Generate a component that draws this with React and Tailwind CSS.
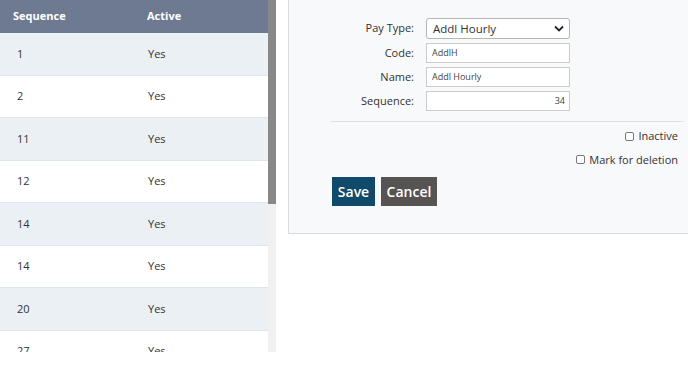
import React from 'react';

const rows = [
    { seq: '1', active: 'Yes' },
    { seq: '2', active: 'Yes' },
    { seq: '11', active: 'Yes' },
    { seq: '12', active: 'Yes' },
    { seq: '14', active: 'Yes' },
    { seq: '14', active: 'Yes' },
    { seq: '20', active: 'Yes' },
    { seq: '27', active: 'Yes' },
];

function Field({ label, children }) {
    return (
        <div className="flex items-center">
            <label className="w-[137px] shrink-0 pr-[12px] text-right text-[11px] text-[#333]">{label}</label>
            {children}
        </div>
    );
}

export default function App() {
    return (
        <div className="flex h-[384px] w-[688px] overflow-hidden bg-white font-['Open_Sans',sans-serif]">
            {/* grid with scrollbar */}
            <div className="flex h-[352px] shrink-0">
                <div className="w-[268px] overflow-hidden">
                    <div className="flex h-[33px] items-center bg-[#6d7a91] text-[11px] font-bold text-white">
                        <span className="w-[147px] pl-[13px]">Sequence</span>
                        <span>Active</span>
                    </div>
                    {rows.map((r, i) => (
                        <div
                            key={i}
                            className={`flex h-[42.5px] items-center border-b border-[#dfe5ec] text-[11px] text-[#333] ${i % 2 === 0 ? 'bg-[#ebf0f5]' : 'bg-white'}`}
                        >
                            <span className="w-[148px] pl-[17px]">{r.seq}</span>
                            <span>{r.active}</span>
                        </div>
                    ))}
                </div>
                <div className="flex w-[8px] flex-col bg-[#f0f0f0]">
                    <div className="h-[204px] bg-[#888888]"></div>
                </div>
            </div>

            {/* edit panel */}
            <div className="ml-[12px] h-[234px] w-[420px] shrink-0 border-b border-l border-[#dcdcdc] bg-[#f8f9fa]">
                <div className="flex flex-col gap-[4px] pt-[18px]">
                    <Field label="Pay Type:">
                        <div className="flex h-[21px] w-[144px] items-center justify-between rounded-[3px] border border-[#b5b5b5] bg-white pl-[6px] pr-[5px] text-[11.5px] text-[#333]">
                            <span>Addl Hourly</span>
                            <svg width="10" height="7" viewBox="0 0 10 7">
                                <path d="M1 1.5 L5 5.5 L9 1.5" fill="none" stroke="#222" strokeWidth="1.8" />
                            </svg>
                        </div>
                    </Field>
                    <Field label="Code:">
                        <div className="flex h-[20px] w-[144px] items-center border border-[#cccccc] bg-white pl-[5px] text-[9px] text-[#444]">
                            AddlH
                        </div>
                    </Field>
                    <Field label="Name:">
                        <div className="flex h-[20px] w-[144px] items-center border border-[#cccccc] bg-white pl-[5px] text-[9px] text-[#444]">
                            Addl Hourly
                        </div>
                    </Field>
                    <Field label="Sequence:">
                        <div className="flex h-[20px] w-[144px] items-center justify-end border border-[#cccccc] bg-white pr-[4px] text-[9px] text-[#444]">
                            34
                        </div>
                    </Field>
                </div>

                <div className="mt-[10px] ml-[42px] w-[353px] border-t border-[#e2e2e2]"></div>

                <div className="flex w-[400px] flex-col items-end gap-[7px] pr-[11px] pt-[6px] text-[11px] text-[#333]">
                    <label className="flex items-center gap-[4px]">
                        <span className="h-[9px] w-[9px] rounded-[2px] border border-[#777] bg-white"></span>
                        Inactive
                    </label>
                    <label className="flex items-center gap-[4px]">
                        <span className="h-[9px] w-[9px] rounded-[2px] border border-[#777] bg-white"></span>
                        Mark for deletion
                    </label>
                </div>

                <div className="ml-[43px] mt-[9px] flex gap-[6px]">
                    <button className="h-[29px] w-[43px] bg-[#0f4a6b] text-[14px] font-semibold text-white">Save</button>
                    <button className="h-[29px] w-[56px] bg-[#555453] text-[14px] font-semibold text-white">Cancel</button>
                </div>
            </div>
        </div>
    );
}
